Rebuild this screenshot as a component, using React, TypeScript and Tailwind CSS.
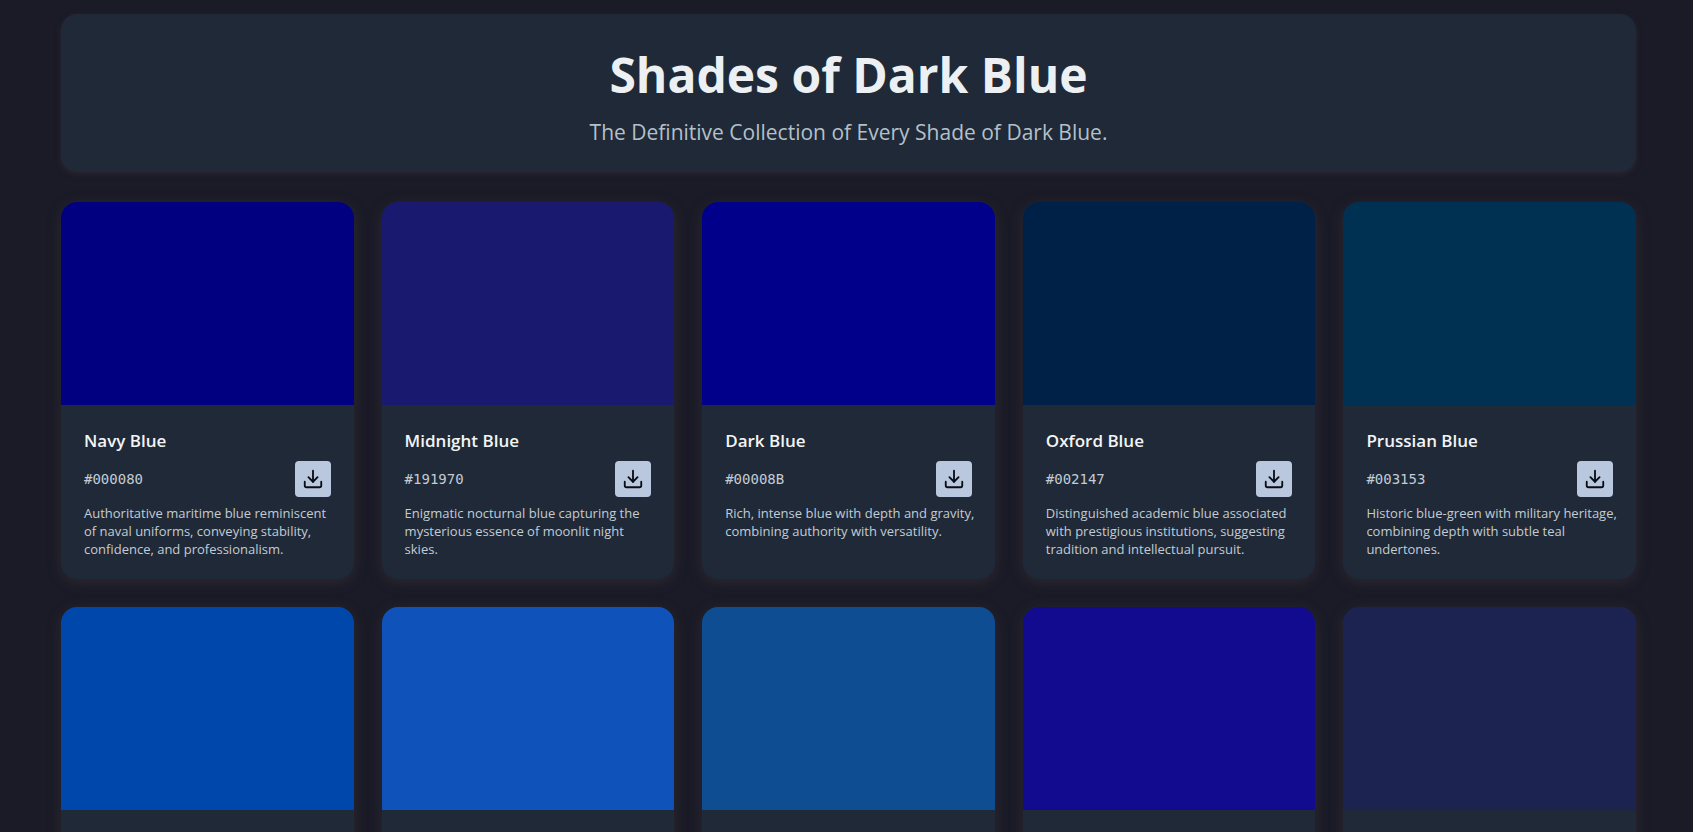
import { Download } from "lucide-react";

const shades = [
  { name: "Navy Blue", hex: "#000080", description: "Authoritative maritime blue reminiscent\nof naval uniforms, conveying stability,\nconfidence, and professionalism." },
  { name: "Midnight Blue", hex: "#191970", description: "Enigmatic nocturnal blue capturing the\nmysterious essence of moonlit night\nskies." },
  { name: "Dark Blue", hex: "#00008B", description: "Rich, intense blue with depth and gravity,\ncombining authority with versatility." },
  { name: "Oxford Blue", hex: "#002147", description: "Distinguished academic blue associated\nwith prestigious institutions, suggesting\ntradition and intellectual pursuit." },
  { name: "Prussian Blue", hex: "#003153", description: "Historic blue-green with military heritage,\ncombining depth with subtle teal\nundertones." },
];

// second row, only the swatches are above the fold
const moreShades = ["#0047AB", "#0F52BA", "#0F4D92", "#120A8F", "#1C2351"];

function ShadeCard({ name, hex, description }: { name: string; hex: string; description: string }) {
  return (
    <article className="flex flex-col rounded-2xl overflow-hidden bg-[#1f2937] shadow-[0_3px_14px_rgba(75,60,65,0.4)]">
      <div className="h-[203px]" style={{ background: hex }} />
      <div className="px-[23px] pt-6 pb-[21px]">
        <h2 className="text-[17px] leading-6 font-semibold text-[#f3f4f6]">{name}</h2>
        <div className="mt-2 flex items-center justify-between">
          <code className="font-['DejaVu_Sans_Mono',monospace] text-sm text-[#c3ccd4]">{hex}</code>
          <button
            type="button"
            aria-label={`Download ${name}`}
            className="flex size-9 items-center justify-center rounded bg-[#b9c7df] text-[#0a0c14]"
          >
            <Download className="size-[22px]" />
          </button>
        </div>
        <p className="mt-[7px] -mr-4 whitespace-pre-line text-[13px] leading-[18px] text-[#c3ccd4]">{description}</p>
      </div>
    </article>
  );
}

export default function App() {
  return (
    <div className="h-screen overflow-hidden bg-[#1a1b27] pt-3.5 pl-[61px] pr-[57px] font-['Open_Sans','Noto_Sans',sans-serif]">
      <header className="rounded-2xl bg-[#1f2937] pt-8 pb-6 text-center shadow-[0_2px_6px_rgba(75,60,65,0.35)]">
        <h1 className="text-5xl leading-[58px] font-bold text-[#ecf0f3]">Shades of Dark Blue</h1>
        <p className="mt-3 text-[21px] leading-8 text-[#b4c0c9]">
          The Definitive Collection of Every Shade of Dark Blue.
        </p>
      </header>

      <main className="mt-[30px] grid grid-cols-5 gap-7">
        {shades.map((shade) => (
          <ShadeCard key={shade.hex} {...shade} />
        ))}
        {moreShades.map((hex) => (
          <article key={hex} className="h-[376px] rounded-2xl overflow-hidden bg-[#1f2937] shadow-[0_3px_14px_rgba(75,60,65,0.4)]">
            <div className="h-[203px]" style={{ background: hex }} />
          </article>
        ))}
      </main>
    </div>
  );
}
